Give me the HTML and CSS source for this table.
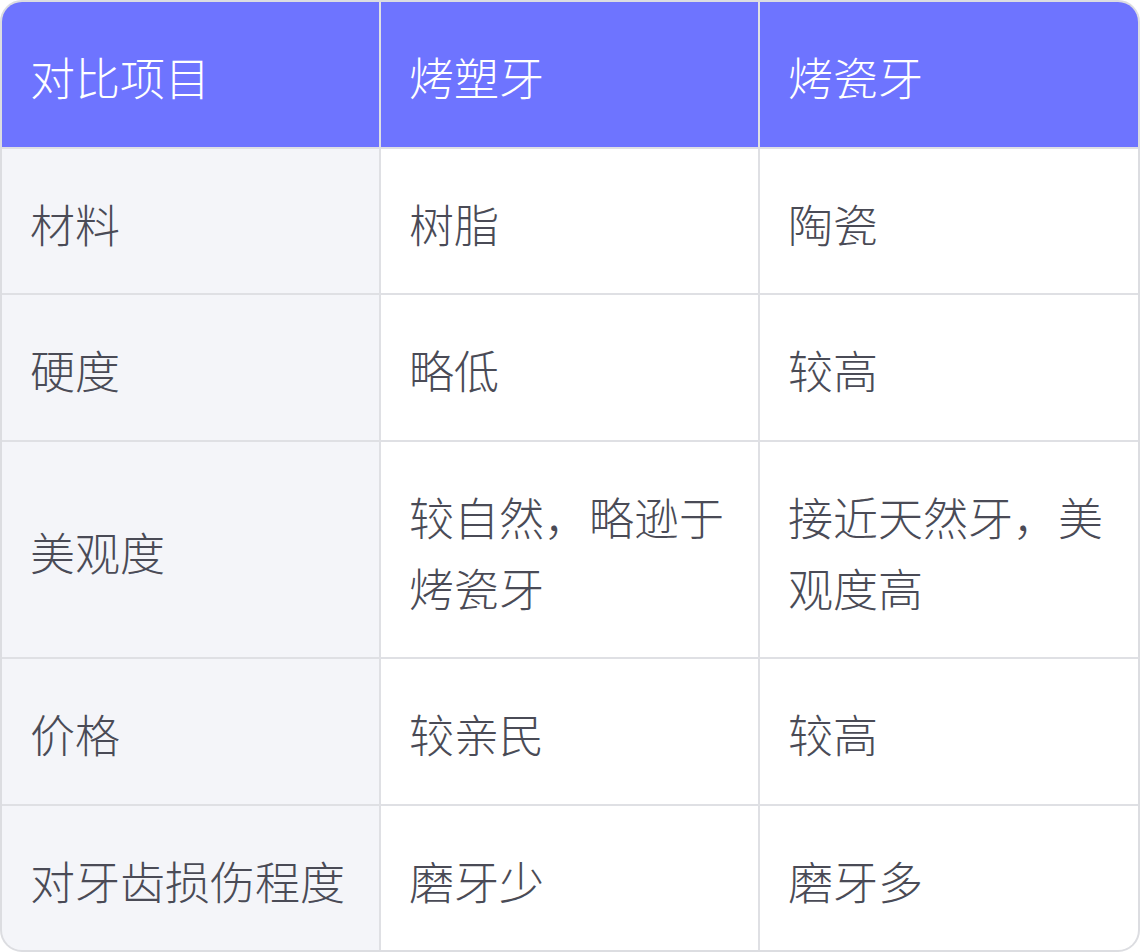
FILE: index.html
```html
<!DOCTYPE html>
<html lang="zh-CN">
<head>
<meta charset="utf-8">
<title>烤塑牙与烤瓷牙对比</title>
<link rel="stylesheet" href="styles.css">
</head>
<body>
<div class="table">
  <div class="cell head">对比项目</div>
  <div class="cell head">烤塑牙</div>
  <div class="cell head">烤瓷牙</div>

  <div class="cell label">材料</div>
  <div class="cell">树脂</div>
  <div class="cell">陶瓷</div>

  <div class="cell label">硬度</div>
  <div class="cell">略低</div>
  <div class="cell">较高</div>

  <div class="cell label">美观度</div>
  <div class="cell">较自然，略逊于烤瓷牙</div>
  <div class="cell">接近天然牙，美观度高</div>

  <div class="cell label">价格</div>
  <div class="cell">较亲民</div>
  <div class="cell">较高</div>

  <div class="cell label">对牙齿损伤程度</div>
  <div class="cell">磨牙少</div>
  <div class="cell">磨牙多</div>
</div>
</body>
</html>
```
FILE: styles.css
```css
html, body {
  margin: 0;
  padding: 0;
  background: #ffffff;
}
body {
  width: 1140px;
  height: 952px;
}
.table {
  box-sizing: border-box;
  width: 1140px;
  height: 952px;
  border: 2px solid #dcdde1;
  border-radius: 22px;
  overflow: hidden;
  display: grid;
  grid-template-columns: 377px 377px 1fr;
  grid-auto-rows: auto;
  gap: 2px;
  background: #dfe0e4;
  font-family: "Noto Sans CJK SC", "Noto Sans", sans-serif;
  font-size: 45px;
  font-weight: 300;
  line-height: 71px;
  color: #4a4b56;
}
.cell {
  background: #ffffff;
  padding: 39px 28px 34px 28px;
  display: flex;
  align-items: center;
}
.cell.head {
  background: #6e74ff;
  color: #ffffff;
}
.cell.label {
  background: #f4f5f9;
}
```
